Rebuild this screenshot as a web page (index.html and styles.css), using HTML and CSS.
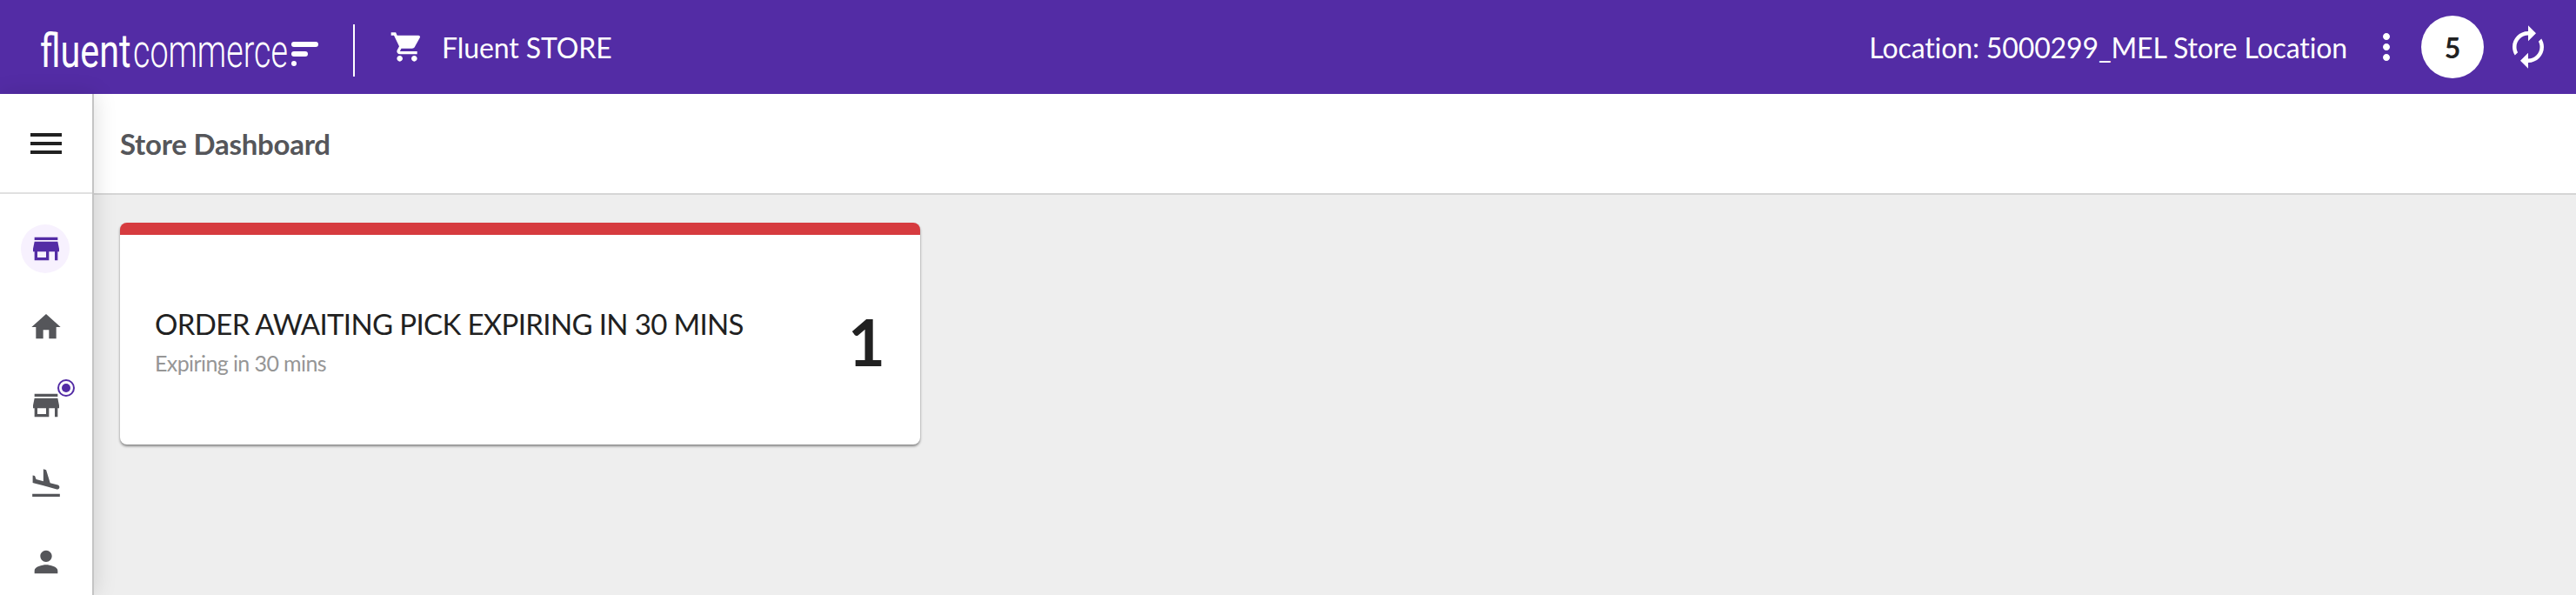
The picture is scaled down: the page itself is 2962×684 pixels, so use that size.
FILE: index.html
```html
<!DOCTYPE html>
<html lang="en">
<head>
<meta charset="UTF-8" />
<meta name="viewport" content="width=device-width, initial-scale=1" />
<title>Fluent STORE</title>
<link rel="stylesheet" href="styles.css">
</head>
<body>

<header class="topbar">
  <div class="logo">
    <span class="logo-bold">fluent</span>
    <span class="logo-light">commerce</span>
    <span class="logo-mark"><i class="bar-long"></i><i class="bar-short"></i><i class="bar-dot"></i></span>
  </div>
  <div class="topbar-divider"></div>
  <svg class="cart-icon" viewBox="0 0 24 24"><path d="M7 18c-1.1 0-1.99.9-1.99 2S5.9 22 7 22s2-.9 2-2-.9-2-2-2zM1 2v2h2l3.6 7.59-1.35 2.45c-.16.28-.25.61-.25.96 0 1.1.9 2 2 2h12v-2H7.42c-.14 0-.25-.11-.25-.25l.03-.12.9-1.63h7.45c.75 0 1.41-.41 1.75-1.03l3.58-6.49c.08-.14.12-.31.12-.48 0-.55-.45-1-1-1H5.21l-.94-2H1zm16 16c-1.1 0-1.99.9-1.99 2s.89 2 1.99 2 2-.9 2-2-.9-2-2-2z"/></svg>
  <span class="app-name">Fluent STORE</span>
  <span class="location">Location: 5000299_MEL Store Location</span>
  <svg class="dots-icon" viewBox="0 0 24 24"><path d="M12 8c1.1 0 2-.9 2-2s-.9-2-2-2-2 .9-2 2 .9 2 2 2zm0 2c-1.1 0-2 .9-2 2s.9 2 2 2 2-.9 2-2-.9-2-2-2zm0 6c-1.1 0-2 .9-2 2s.9 2 2 2 2-.9 2-2-.9-2-2-2z"/></svg>
  <span class="count-badge">5</span>
  <svg class="sync-icon" viewBox="0 0 24 24"><path d="M12 4V1L8 5l4 4V6c3.31 0 6 2.69 6 6 0 1.01-.25 1.97-.7 2.8l1.46 1.46C19.54 15.03 20 13.57 20 12c0-4.42-3.58-8-8-8zm0 14c-3.31 0-6-2.69-6-6 0-1.01.25-1.97.7-2.8L5.24 7.74C4.46 8.97 4 10.43 4 12c0 4.42 3.58 8 8 8v3l4-4-4-4v3z"/></svg>
</header>

<div class="app-body">
  <nav class="sidebar">
    <div class="menu-row">
      <svg class="menu-icon" viewBox="0 0 24 24"><path d="M3 18h18v-2H3v2zm0-5h18v-2H3v2zm0-7v2h18V6H3z"/></svg>
    </div>
    <ul class="nav-list">
      <li class="nav-item active">
        <svg viewBox="0 0 24 24"><path d="M20 4H4v2h16V4zm1 10v-2l-1-5H4l-1 5v2h1v6h10v-6h4v6h2v-6h1zm-9 4H6v-4h6v4z"/></svg>
      </li>
      <li class="nav-item">
        <svg viewBox="0 0 24 24"><path d="M10 20v-6h4v6h5v-8h3L12 3 2 12h3v8z"/></svg>
      </li>
      <li class="nav-item">
        <svg viewBox="0 0 24 24"><path d="M20 4H4v2h16V4zm1 10v-2l-1-5H4l-1 5v2h1v6h10v-6h4v6h2v-6h1zm-9 4H6v-4h6v4z"/></svg>
        <span class="nav-dot"></span>
      </li>
      <li class="nav-item">
        <svg viewBox="0 0 24 24"><path d="M2.5 19h19v2h-19v-2zm7.18-5.73l4.35 1.16 5.31 1.42c.8.21 1.62-.26 1.84-1.06.21-.8-.26-1.62-1.06-1.84l-5.31-1.42-2.76-9.02L10.12 2v8.28L5.15 8.95l-.93-2.32-1.45-.39v5.17l1.6.43 5.31 1.43z"/></svg>
      </li>
      <li class="nav-item">
        <svg viewBox="0 0 24 24"><path d="M12 12c2.21 0 4-1.79 4-4s-1.79-4-4-4-4 1.79-4 4 1.79 4 4 4zm0 2c-2.67 0-8 1.34-8 4v2h16v-2c0-2.66-5.33-4-8-4z"/></svg>
      </li>
    </ul>
  </nav>

  <main class="content">
    <div class="title-bar"><h1>Store Dashboard</h1></div>
    <div class="dashboard">
      <section class="card">
        <div class="card-body">
          <div>
            <div class="card-title">ORDER AWAITING PICK EXPIRING IN 30 MINS</div>
            <div class="card-sub">Expiring in 30 mins</div>
          </div>
          <div class="card-count">1</div>
        </div>
      </section>
    </div>
  </main>
</div>

</body>
</html>
```

FILE: styles.css
```css
html, body { margin: 0; height: 100%; overflow: hidden; }
body { font-family: Lato, "Liberation Sans", sans-serif; background: #eee; color: #212121; }
svg { display: block; fill: currentColor; }

.topbar { display: flex; align-items: center; height: 108px; background: #532ca5; color: #fff; padding: 0 28px 0 46px; }
.logo { display: flex; align-items: center; width: 320px; height: 60px; font-family: Roboto, sans-serif; font-size: 53px; line-height: 60px; }
.logo-bold, .logo-light { display: inline-block; margin-top: 10px; transform-origin: left center; white-space: nowrap; }
.logo-bold { width: 107px; font-weight: 400; transform: scaleX(.78); }
.logo-light { width: 182px; font-weight: 300; transform: scaleX(.71); }
.logo-mark { display: flex; flex-direction: column; gap: 5px; width: 31px; margin-top: 16px; }
.logo-mark i { display: block; height: 6px; background: #fff; border-radius: 3px; }
.bar-long { width: 31px; }
.bar-short { width: 19px; }
.bar-dot { width: 6px; }
.topbar-divider { width: 2px; height: 60px; margin: 8px 0 0 40px; background: #fff; }
.cart-icon { width: 40px; height: 40px; margin-left: 40px; }
.app-name { margin-left: 20px; font-size: 32px; letter-spacing: -.1px; }
.location { margin-left: auto; font-size: 32px; letter-spacing: -.12px; }
.dots-icon { width: 48px; height: 48px; margin-left: 21px; }
.count-badge { display: flex; align-items: center; justify-content: center; width: 72px; height: 72px; margin-left: 16px; border-radius: 50%; background: #fff; color: #212121; font-size: 32px; font-weight: 700; }
.sync-icon { width: 54px; height: 54px; margin-left: 24px; transform: scaleX(-1); }

.app-body { display: flex; height: 576px; }
.sidebar { width: 106px; flex: none; background: #fff; border-right: 2px solid #c4c4c4; position: relative; z-index: 1; box-shadow: 2px 0 24px rgba(0, 0, 0, .12); }
.menu-row { display: flex; align-items: center; justify-content: center; height: 113px; border-bottom: 2px solid #e0e0e0; }
.menu-icon { width: 48px; height: 48px; color: #212121; }
.nav-list { list-style: none; margin: 0; padding: 18px 0 0; }
.nav-item { position: relative; display: flex; align-items: center; justify-content: center; height: 90px; color: #55565a; }
.nav-item svg { width: 40px; height: 40px; }
.nav-item.active { color: #532ca5; }
.nav-item.active::before { content: ""; position: absolute; left: 24px; top: 17px; width: 56px; height: 56px; border-radius: 50%; background: #f7f1fe; }
.nav-item.active svg { position: relative; }
.nav-dot { position: absolute; left: 66px; top: 15px; width: 20px; height: 20px; box-sizing: border-box; border: 2px solid #532ca5; border-radius: 50%; }
.nav-dot::after { content: ""; position: absolute; left: 3px; top: 3px; width: 10px; height: 10px; border-radius: 50%; background: #532ca5; }

.content { flex: 1; min-width: 0; }
.title-bar { display: flex; align-items: center; height: 114px; padding-left: 30px; background: #fff; border-bottom: 2px solid #d5d5d5; }
.title-bar h1 { margin: 0; font-size: 33px; font-weight: 700; letter-spacing: -.25px; color: #55565a; }
.dashboard { padding: 32px 30px; }
.card { width: 920px; height: 255px; box-sizing: border-box; background: #fff; border-top: 14px solid #d63b3f; border-radius: 8px; box-shadow: 0 2px 3px rgba(0, 0, 0, .45); }
.card-body { display: flex; align-items: center; justify-content: space-between; height: 100%; padding: 3px 40px 0 40px; box-sizing: border-box; }
.card-title { font-size: 33px; letter-spacing: -.65px; color: #212121; }
.card-sub { margin-top: 10px; font-size: 25px; letter-spacing: -.6px; color: #969696; }
.card-count { font-size: 74px; font-weight: 700; color: #212121; }
```
